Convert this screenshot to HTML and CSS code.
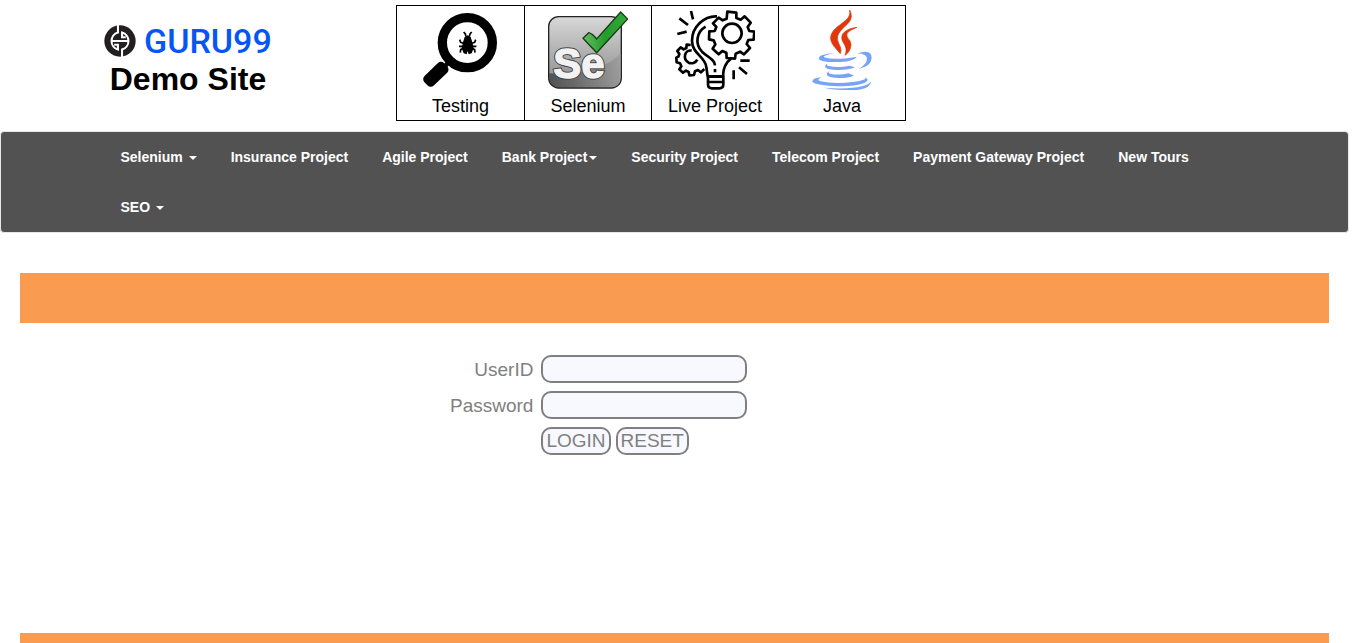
FILE: index.html
```html
<!DOCTYPE html>
<html lang="en">
<head>
<meta charset="utf-8">
<title>Guru99 Demo Site</title>
<link rel="stylesheet" href="styles.css">
</head>
<body>
<header class="header">
  <div class="brand">
    <a class="logo" href="#">
      <svg class="logo-mark" viewBox="43 44 94 94" aria-hidden="true">
        <circle cx="90" cy="91" r="46" fill="#231f20"/>
        <path d="M84 44v22a26 26 0 0 0 0 50v-14h-11M96 138v-22a26 26 0 0 0 0-50v14h11M68 91h44" stroke="#fff" stroke-width="6" fill="none"/>
      </svg>
      <span>GURU99</span>
    </a>
    <h1 class="title">Demo Site</h1>
  </div>
  <nav class="topics" aria-label="Topics">
    <a class="topic" href="#">
      <svg class="topic-icon" viewBox="90 30 240 240" aria-hidden="true">
        <circle cx="229" cy="128" r="75" fill="none" stroke="#000" stroke-width="28"/>
        <path d="M164 196l18-18" stroke="#000" stroke-width="14"/>
        <rect x="94" y="202" width="82" height="40" rx="13" transform="rotate(-44 136 223)"/>
        <path d="M230 106l-9 5-5 16-4 18 6 15 9 3 3-10 3 10 9-3 6-15-4-18-5-16z"/>
        <path d="M225 110l-2-8-5-6M235 110l2-8 5-6M217 130l-8-3-3-8M243 130l8-3 3-8M216 139h-12M244 139h12M217 145l-8 4-1 9M243 145l8 4 1 9" fill="none" stroke="#000" stroke-width="5"/>
      </svg>
      <span>Testing</span>
    </a>
    <a class="topic" href="#">
      <svg class="topic-icon" viewBox="82 30 240 240" aria-hidden="true">
        <defs>
          <linearGradient id="tile" x1="0" y1="0" x2="0" y2="1"><stop offset="0" stop-color="#d8d8d8"/><stop offset=".5" stop-color="#b0b0b0"/><stop offset="1" stop-color="#8a8a8a"/></linearGradient>
          <linearGradient id="shade" x1="0" y1="0" x2="1" y2="0"><stop offset="0" stop-color="#3c3c3c"/><stop offset="1" stop-color="#9c9c9c"/></linearGradient>
          <linearGradient id="tick" x1="0" y1="0" x2="1" y2="0"><stop offset="0" stop-color="#65bd62"/><stop offset=".5" stop-color="#239b2b"/><stop offset="1" stop-color="#36a93c"/></linearGradient>
        </defs>
        <rect x="84" y="50" width="218" height="214" rx="30" fill="url(#tile)" stroke="#222" stroke-width="4"/>
        <path d="M86 220q150 8 214-60v72q0 30-30 30H116q-30 0-30-30z" fill="url(#shade)" opacity=".75"/>
        <text class="se se-edge" x="98" y="235">Se</text>
        <text class="se" x="98" y="235">Se</text>
        <path d="M187 115l17-17q13 4 24 19l72-81 21 21-93 101z" fill="url(#tick)" stroke="#173c18" stroke-width="4"/>
      </svg>
      <span>Selenium</span>
    </a>
    <a class="topic" href="#">
      <svg class="topic-icon" viewBox="81 30 240 240" aria-hidden="true">
        <g fill="none" stroke="#000" stroke-width="8" stroke-linejoin="round">
          <path d="M238 35l27 3 0 16 13 5 12-10 18 19-9 13 5 12 15 2-2 24-16 1-5 12 10 12-18 19-12-8-13 6-2 15-25-2-1-16-12-5-11 10-18-17 8-13-5-12-14-3 1-24 16-1 5-12-10-11 17-17 12 8 12-5z"/>
          <circle cx="252" cy="100" r="29"/>
          <path d="M207 49C169 47 132 80 132 122c0 40 40 48 43 79l4 28h46q0-35 24-53"/>
          <path d="M173 80c-28 16-33 52-11 75 20 19 38 23 39 41M201 207v10"/>
          <path d="M180 230h46v23q0 12-12 12h-22q-12 0-12-12zM180 246h46"/>
          <path d="M128 135l-12-1-1 10-8 4-9-6-10 11 6 9-3 8-6 3 1 14 10 3 4 9-6 9 11 10 9-6 8 4 2 10 14-1 3-11 9-4 9 7 10-10"/>
          <path d="M131 152c-20-4-29 24-9 36 9 4 21 1 26-9"/>
          <path d="M129 33l6 25M94 55l26 20M88 102l28-7M277 182h28M273 202l24 20M257 211v27"/>
        </g>
      </svg>
      <span>Live Project</span>
    </a>
    <a class="topic" href="#">
      <svg class="topic-icon" viewBox="84 30 240 240" aria-hidden="true">
        <path fill="#e0380c" stroke="#e0380c" stroke-width="2" d="M227 30C241 58 223 69 206 86C192 100 187 110 193 127C198 139 204 149 199 161C188 147 172 134 170 117C168 96 188 82 205 69C221 57 230 48 227 30ZM249 82C226 92 217 98 219 108C221 118 232 122 231 135C230 150 222 160 213 166C219 150 216 140 208 128C198 112 201 89 249 82Z"/>
        <g fill="#75a4f8">
          <path d="M183 159Q145 166 150 172Q180 182 249 170Q239 183 200 186Q139 188 134 176Q133 163 183 159Z"/>
          <path d="M250 160Q293 145 293 174Q292 199 253 207Q278 193 279 176Q279 162 250 160Z"/>
          <path d="M165 190Q153 195 164 198Q194 204 227 197L243 202Q222 211 187 210Q151 208 153 198Q155 192 165 190Z"/>
          <path d="M170 213Q158 218 168 221Q195 227 224 220L240 227Q221 235 192 234Q157 232 158 221Q160 215 170 213Z"/>
          <path d="M143 232Q125 240 140 244Q181 253 237 246Q282 240 273 232Q291 240 269 250Q236 261 178 258Q119 255 115 244Q116 234 143 232Z"/>
          <path d="M149 263Q222 269 264 259Q286 254 292 244Q289 265 255 269Q198 274 149 263Z"/>
        </g>
      </svg>
      <span>Java</span>
    </a>
  </nav>
</header>
<nav class="navbar" aria-label="Main">
  <ul class="menu">
    <li><a href="#">Selenium <span class="caret"></span></a></li>
    <li><a href="#">Insurance Project</a></li>
    <li><a href="#">Agile Project</a></li>
    <li><a href="#">Bank Project<span class="caret"></span></a></li>
    <li><a href="#">Security Project</a></li>
    <li><a href="#">Telecom Project</a></li>
    <li><a href="#">Payment Gateway Project</a></li>
    <li><a href="#">New Tours</a></li>
    <li><a href="#">SEO <span class="caret"></span></a></li>
  </ul>
</nav>
<main class="content">
  <div class="band"></div>
  <form class="login">
    <label for="uid">UserID</label>
    <input class="field" id="uid" type="text">
    <label for="pwd">Password</label>
    <input class="field" id="pwd" type="password">
    <div class="actions">
      <button class="btn" type="submit">LOGIN</button>
      <button class="btn" type="reset">RESET</button>
    </div>
  </form>
  <div class="band"></div>
</main>
</body>
</html>
```
FILE: styles.css
```css
* { box-sizing: border-box; }
body {
  display: flex;
  flex-direction: column;
  height: 100vh;
  margin: 0;
  padding-right: 17px;
  background: #fff;
  color: #000;
  font-family: "Liberation Sans", Arial, sans-serif;
}
a { color: inherit; text-decoration: none; }
.header {
  display: flex;
  align-items: flex-start;
  padding: 5px 0 10px 104px;
}
.brand {
  width: 168px;
  margin-right: 124px;
  padding-top: 17px;
  text-align: center;
}
.logo {
  display: flex;
  align-items: center;
  gap: 8px;
  color: #0556f3;
  font: 500 34px/38px Roboto, sans-serif;
}
.logo-mark { flex: none; width: 32px; height: 32px; }
.title { margin: 0; font-size: 32px; line-height: 38px; }
.topics {
  display: flex;
  border: 1px solid #000;
}
.topic {
  display: flex;
  flex-direction: column;
  align-items: center;
  gap: 3px;
  width: 127px;
  padding: 4px 0 1px;
  font-size: 18px;
  line-height: 26px;
}
.topic + .topic { border-left: 1px solid #000; }
.topic-icon { width: 80px; height: 80px; }
.se {
  fill: #f2f2f2;
  stroke: #f2f2f2;
  stroke-width: 4px;
  font: bold 126px "Liberation Sans", Arial, sans-serif;
}
.se-edge { stroke: #444; stroke-width: 10px; }
.navbar {
  border: 1px solid #e7e7e7;
  border-radius: 4px;
  background: #525252;
}
.menu {
  display: flex;
  flex-wrap: wrap;
  column-gap: 4px;
  max-width: 1138px;
  margin: 0 auto;
  padding: 0;
  list-style: none;
}
.menu a {
  display: block;
  padding: 15px;
  color: #fff;
  font-size: 14px;
  font-weight: bold;
  line-height: 20px;
}
.caret {
  display: inline-block;
  margin-left: 2px;
  border: 4px solid transparent;
  border-top-color: #fff;
  border-bottom: 0;
  vertical-align: middle;
}
.content {
  flex: 1;
  min-height: 0;
  padding: 40px 20px 0;
  overflow: hidden;
}
.band { height: 50px; background: #f99b51; }
.login {
  display: grid;
  grid-template-columns: max-content 206px;
  align-content: start;
  gap: 8px;
  min-height: 310px;
  padding: 32px 0 0 430px;
  color: #808080;
  font-size: 19px;
  line-height: 29px;
}
.login label { height: 28px; text-align: right; }
.field, .btn {
  height: 28px;
  border: 2px solid #808080;
  border-radius: 10px;
  background: #f8f8ff;
  color: #808080;
  font: 19px "Liberation Sans", Arial, sans-serif;
}
.field { width: 100%; padding: 0 8px; }
.btn { padding: 0 3px; }
.actions { display: flex; grid-column: 2; gap: 5px; }
```
